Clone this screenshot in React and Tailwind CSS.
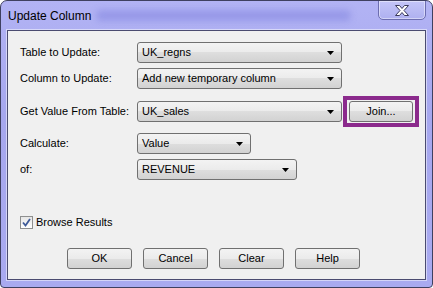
import React from 'react';

const font = { fontFamily: '"Liberation Sans", Arial, sans-serif' };

function Combo({ value, w }) {
  return (
    <div
      className={`flex h-[21px] items-center justify-between rounded-[3px] border border-[#707070] bg-[linear-gradient(#f3f3f3_0%,#ebebeb_50%,#dedede_50%,#d2d2d2_100%)] pl-[4px] pr-[7px] ${w}`}
    >
      <span className="text-[11px] leading-none text-black">{value}</span>
      <svg width="7" height="4" viewBox="0 0 7 4">
        <path d="M0 0h7L3.5 4z" fill="#000" />
      </svg>
    </div>
  );
}

function Btn({ children, w = 'w-[65px]' }) {
  return (
    <button
      type="button"
      className={`flex h-[21px] items-center justify-center rounded-[3px] border border-[#707070] bg-[linear-gradient(#f3f3f3_0%,#ebebeb_50%,#dedede_50%,#d2d2d2_100%)] text-[11px] leading-none text-black ${w}`}
    >
      {children}
    </button>
  );
}

export default function App() {
  return (
    <div
      style={font}
      className="relative flex h-[288px] w-[433px] flex-col overflow-hidden rounded-t-[7px] rounded-b-[4px] border border-[#3f4060] bg-[linear-gradient(#b2b3f4,#a6a7ee_40%,#a9aaf0)]"
    >
      {/* title bar */}
      <div className="relative flex h-[29px] items-center">
        <div className="absolute left-[95px] top-[9px] h-[11px] w-[255px] rounded-full bg-[#8d8fe4] opacity-70 blur-[3px]" />
        <span className="relative pl-[7px] pt-[1px] text-[12px] text-black">Update Column</span>
        <div className="absolute right-[6px] top-[-1px] flex h-[20px] w-[48px] items-center justify-center rounded-b-[5px] border border-[#6c6db0] bg-[linear-gradient(#c4c5f8,#aeb0f0)] shadow-[inset_0_0_0_1px_rgba(255,255,255,0.45)]">
          <svg width="16" height="13" viewBox="0 0 16 13">
            <path
              d="M1.5 1.5h4l2.5 3 2.5-3h4l-4.5 5 4.5 5h-4l-2.5-3-2.5 3h-4l4.5-5z"
              fill="#fff"
              stroke="#3a3a5a"
              strokeWidth="1"
              strokeLinejoin="round"
            />
          </svg>
        </div>
      </div>

      {/* client area */}
      <div className="mx-[6px] flex h-[250px] flex-col border border-[#4a4b70] bg-[#f0f0f0] pl-[12px] pt-[11px] shadow-[0_0_0_1px_rgba(255,255,255,0.5)]">
        <div className="flex items-center">
          <span className="w-[117px] text-[11px] text-black">Table to Update:</span>
          <Combo value="UK_regns" w="w-[205px]" />
        </div>
        <div className="mt-[5px] flex items-center">
          <span className="w-[117px] text-[11px] text-black">Column to Update:</span>
          <Combo value="Add new temporary column" w="w-[205px]" />
        </div>
        <div className="mt-[7px] flex items-center">
          <span className="w-[117px] text-[11px] text-black">Get Value From Table:</span>
          <Combo value="UK_sales" w="w-[205px]" />
          <div className="ml-[1px] flex h-[31px] w-[76px] items-center justify-center border-[4px] border-[#8b2a8c]">
            <Btn w="w-[64px]">Join...</Btn>
          </div>
        </div>
        <div className="mt-[6px] flex items-center">
          <span className="w-[117px] text-[11px] text-black">Calculate:</span>
          <Combo value="Value" w="w-[114px]" />
        </div>
        <div className="mt-[5px] flex items-center">
          <span className="w-[117px] text-[11px] text-black">of:</span>
          <Combo value="REVENUE" w="w-[160px]" />
        </div>

        <div className="mt-[34px] flex items-center gap-[3px]">
          <div className="flex h-[13px] w-[13px] items-center justify-center border border-[#8e8f8f] bg-[linear-gradient(#e6e6e6,#ffffff)]">
            <svg width="9" height="9" viewBox="0 0 9 9">
              <path d="M1 4.5l2.5 3L8 1" fill="none" stroke="#3f5b99" strokeWidth="1.8" />
            </svg>
          </div>
          <span className="text-[11px] text-black">Browse Results</span>
        </div>

        <div className="mt-[17px] flex gap-[11px] pl-[47px]">
          <Btn>OK</Btn>
          <Btn>Cancel</Btn>
          <Btn>Clear</Btn>
          <Btn>Help</Btn>
        </div>
      </div>
    </div>
  );
}
